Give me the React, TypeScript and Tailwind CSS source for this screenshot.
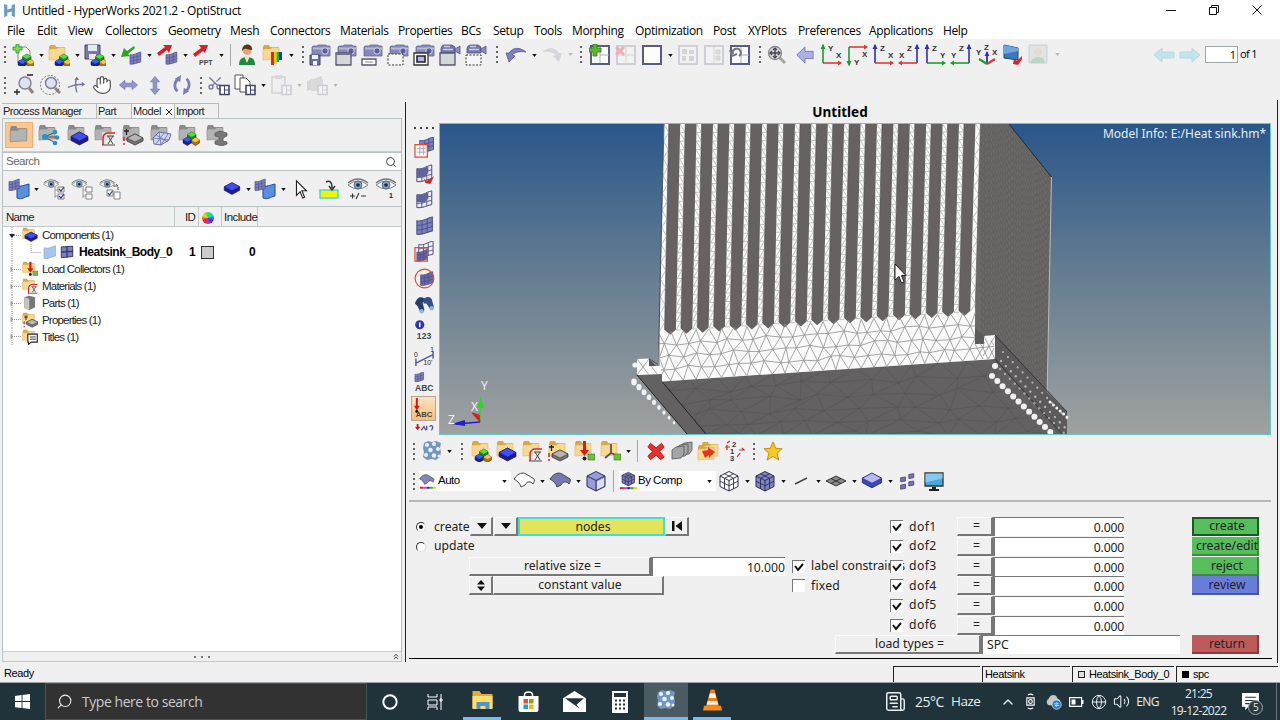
import React from 'react';
import { ChevronUp, Globe, Hand, Newspaper, Scissors, Search, Volume2 } from 'lucide-react';

interface IcoProps {
  children: React.ReactNode;
  className?: string;
}

const Ico: React.FC<IcoProps> = ({ children, className = 'w-[22px] h-[22px]' }) => (
  <svg viewBox="0 0 22 22" className={`shrink-0 ${className}`} fill="none">
    {children}
  </svg>
);

const Slot: React.FC<IcoProps> = ({ children, className = 'w-[26px]' }) => (
  <div className={`flex items-center justify-center shrink-0 ${className}`}>{children}</div>
);

const Drop = ({ faded = false, className = 'w-[10px]' }: { faded?: boolean; className?: string }) => (
  <div className={`flex items-center justify-center shrink-0 ${className}`}>
    <svg viewBox="0 0 6 4" className={faded ? 'w-[5px] h-[3px]' : 'w-[5px] h-[3px] mt-[1px]'}>
      <path d="M0 0h6L3 4z" fill={faded ? '#b5b5b5' : '#111'} />
    </svg>
  </div>
);

const Grip = ({ className = 'w-[10px]' }: { className?: string }) => (
  <div className={`flex flex-col items-center justify-center gap-[3px] shrink-0 ${className}`}>
    {[0, 1, 2, 3].map((i) => (
      <span key={i} className="w-[2px] h-[2px] bg-[#666]" />
    ))}
  </div>
);

const Sep = ({ className = 'w-[8px]' }: { className?: string }) => (
  <div className={`flex items-center justify-center shrink-0 ${className}`}>
    <span className="w-px h-[22px] bg-[#a8a8a8]" />
  </div>
);

// ---- shared icon parts ----

const Folder = ({ grey = false, x = 0, y = 0 }: { grey?: boolean; x?: number; y?: number }) => (
  <g transform={`translate(${x} ${y})`}>
    <path d="M1 3l1-2h5l1 2h8l1 1v11H1z" fill={grey ? '#8a8a8a' : '#dba648'} />
    <path d="M1 16V5.500l2-.500h6l1-1.500h7V15z" fill={grey ? '#b3b3b3' : '#f9d98f'} stroke={grey ? '#858585' : '#e3b55c'} strokeWidth="0.600" />
  </g>
);

const Block = ({ x, y, s = 1, top, side }: { x: number; y: number; s?: number; top: string; side: string }) => (
  <g transform={`translate(${x} ${y}) scale(${s})`}>
    <path d="M0 3l5-3 5 3v4l-5 3-5-3z" fill={side} stroke="#222" strokeWidth="0.6" />
    <path d="M0 3l5-3 5 3-5 3z" fill={top} />
  </g>
);

const Blocks = ({ x = 0, y = 0 }: { x?: number; y?: number }) => (
  <g transform={`translate(${x} ${y})`}>
    <Block x={2.5} y={-1} s={0.85} top="#52e03a" side="#188a12" />
    <Block x={-2} y={4} s={0.85} top="#3c5df0" side="#1421a0" />
    <Block x={6.5} y={4.5} s={0.8} top="#ffc14a" side="#b36d0a" />
  </g>
);

const Slab = ({ x = 5, y = 9, top = '#3f4df2', side = '#1a1a9c' }: { x?: number; y?: number; top?: string; side?: string }) => (
  <g transform={`translate(${x} ${y})`}>
    <path d="M0 4.500L8.500 0 17 4.500v4L8.500 13 0 8.500z" fill={side} stroke="#1b1b4d" strokeWidth="0.7" />
    <path d="M0 4.500L8.500 0 17 4.500 8.500 9z" fill={top} stroke="#1b1b4d" strokeWidth="0.5" />
  </g>
);

const MeshPatch = ({ x = 0, y = 0, s = 1, fill = '#7b80c4' }: { x?: number; y?: number; s?: number; fill?: string }) => (
  <g transform={`translate(${x} ${y}) scale(${s})`}>
    <path d="M0 3C5 4 7 1 12 0v11C7 12 5 14 0 13.500z" fill={fill} stroke="#4b4e80" strokeWidth="0.8" />
    <path d="M0 6.500C5 7 7 5 12 4M0 10C5 10.500 7 8.500 12 7.500M4 3.500v10M8 1.500v11" stroke="#4b4e80" strokeWidth="0.7" />
  </g>
);

const Material = ({ x = 8, y = 8 }: { x?: number; y?: number }) => (
  <g transform={`translate(${x} ${y})`}>
    <path d="M0 0h13v13H0z" fill="#f3f0ec" fillOpacity="0.700" />
    <path d="M1 13V5C2 2 4 1 6 1h7" stroke="#d22" strokeWidth="1.500" />
    <path d="M0 13h13M5 4h7M6 4l5 8M11 4L6 12" stroke="#444" strokeWidth="1" />
  </g>
);

const Property = ({ x = 0, y = 6 }: { x?: number; y?: number }) => (
  <g transform={`translate(${x} ${y})`}>
    <path d="M2 2h5M4.500 0v6" stroke="#222" strokeWidth="1.300" />
    <path d="M2 8v4M2 14v2" stroke="#d22" strokeWidth="1.500" />
    <path d="M5 9l8-4 8 4v3l-8 4-8-4z" fill="#777" stroke="#222" strokeWidth="0.700" />
    <path d="M5 9l8-4 8 4-8 4z" fill="#b5b5b5" stroke="#222" strokeWidth="0.500" />
  </g>
);

const Load = () => (
  <g>
    <path d="M10 1h3v9h3l-4.500 6L7 10h3z" fill="#e01818" />
    <circle cx="11.500" cy="18.500" r="2" fill="#222" />
    <path d="M15 14h7v6h-7z" fill="#6fbf40" stroke="#35701a" strokeWidth="0.600" />
  </g>
);

const Camera = () => (
  <g>
    <path d="M3 3l1-1h4l1-1h8l1 1h3v10H3z" fill="#8588b8" stroke="#66689a" strokeWidth="0.800" />
    <path d="M4 3.500h17v2H4z" fill="#b6b8d8" />
    <circle cx="16" cy="7" r="3.200" fill="#5d6092" stroke="#dcdcf0" strokeWidth="0.900" />
  </g>
);

const Video = () => (
  <g>
    <path d="M3 2l2-1h8l3 2v6H2V4z" fill="#7477aa" stroke="#50527f" strokeWidth="0.800" />
    <path d="M16 5l5-3v8l-5-3z" fill="#8b8ebc" stroke="#50527f" strokeWidth="0.800" />
    <path d="M5 2.500h6M4 5.500h10" stroke="#c9cbe5" strokeWidth="1.300" />
  </g>
);

const Eye = ({ y = 0 }: { y?: number }) => (
  <g transform={`translate(0 ${y})`}>
    <path d="M1 5Q11-3 21 5" stroke="#777" strokeWidth="1.300" />
    <path d="M1 7Q11-1 21 7Q11 15 1 7z" fill="#f4f4f4" stroke="#777" strokeWidth="0.900" />
    <circle cx="11" cy="7" r="4" fill="#7f9fc4" stroke="#46627f" strokeWidth="0.700" />
    <circle cx="11" cy="7" r="1.800" fill="#1c2b3c" />
  </g>
);

const Layout = ({ children, faded = false }: { children?: React.ReactNode; faded?: boolean }) => (
  <g opacity={faded ? 0.22 : 1}>
    <path d="M2 2h18v18H2z" fill="#fdfdff" stroke="#5a5c84" strokeWidth="2" />
    {children}
  </g>
);

const MiniWindow = () => (
  <g>
    <path d="M12 11.500h9v9h-9z" fill="#fff" stroke="#44466b" strokeWidth="1.600" />
    <path d="M16.500 12v8M17 16h4" stroke="#44466b" strokeWidth="1" />
  </g>
);

const Cube = ({ fill = '#9a9ddb', mesh = false }: { fill?: string; mesh?: boolean }) => (
  <g stroke="#2c2e52" strokeWidth="1">
    <path d="M2 6l9-4.500L20 6v10.500L11 21l-9-4.500z" fill={fill} />
    <path d="M2 6l9 4.500L20 6M11 10.500V21" />
    {mesh && <path d="M6.500 3.800l9 4.500v10.500M15.500 3.800l-9 4.500v10.500M2 11.200l9 4.500 9-4.500" strokeWidth="0.900" />}
    {!mesh && <path d="M12 11.500l7-3.500v8l-7 3.500z" fill="#dddffa" strokeWidth="0" />}
  </g>
);

const Sheet = ({ fill = 'none' }: { fill?: string }) => (
  <path d="M1 9C5 3 10 2 13 4l8 5c1 1 0 3-1 5-2-3-6-3-8 1L8 17c-1-4-4-6-7-8z" fill={fill} stroke="#444" strokeWidth="1" />
);

const HyperCube = () => (
  <g>
    <path d="M3 3l4-2 4 1 4-1 5 2-1 5 1 4-1 5-4 3-4-1-5 1-4-3 1-5-1-4z" fill="#7796bd" />
    <g fill="#e8f1fa">
      <circle cx="6" cy="5" r="2" />
      <circle cx="13" cy="4" r="2" />
      <circle cx="9.500" cy="10" r="2.300" />
      <circle cx="17" cy="9" r="2" />
      <circle cx="5" cy="15" r="2" />
      <circle cx="13" cy="15.500" r="2.300" />
      <circle cx="18" cy="16" r="1.500" />
    </g>
  </g>
);

interface AxisProps {
  up: [string, string];
  side: [string, string];
  flip?: boolean;
  down?: boolean;
}

const AxisView: React.FC<AxisProps> = ({ up, side, flip = false, down = false }) => {
  const x = flip ? 19 : 3;
  const end = flip ? 1 : 21;
  const y = down ? 3 : 19;
  const tip = down ? 21 : 1;
  const dx = flip ? 3 : -3;
  const dy = down ? -4 : 4;
  return (
    <Ico>
      <path d={`M${x} ${y}V${tip}`} stroke={up[1]} strokeWidth="1.600" />
      <path d={`M${x - 2.5} ${tip + dy}L${x} ${tip - dy / 3}L${x + 2.5} ${tip + dy}z`} fill={up[1]} />
      <path d={`M${x} ${y}H${end}`} stroke={side[1]} strokeWidth="1.600" />
      <path d={`M${end + dx} ${y - 2.5}L${end - dx / 3} ${y}L${end + dx} ${y + 2.5}z`} fill={side[1]} />
      <g fill="#333" fontFamily="Liberation Sans, sans-serif" fontWeight="700" fontSize="8">
        <text x={flip ? 9 : 8} y={down ? 21 : 7}>{up[0]}</text>
        <text x={flip ? 1 : 16} y={down ? 13 : 14}>{side[0]}</text>
      </g>
    </Ico>
  );
};

const R = '#dc3a3a';
const G = '#17a12b';
const B = '#3030b8';

// ---- title bar and menus ----

const menus = [
  { label: 'File', width: 'w-[30px]' },
  { label: 'Edit', width: 'w-[31px]' },
  { label: 'View', width: 'w-[37px]' },
  { label: 'Collectors', width: 'w-[63px]' },
  { label: 'Geometry', width: 'w-[62px]' },
  { label: 'Mesh', width: 'w-[40px]' },
  { label: 'Connectors', width: 'w-[70px]' },
  { label: 'Materials', width: 'w-[58px]' },
  { label: 'Properties', width: 'w-[63px]' },
  { label: 'BCs', width: 'w-[32px]' },
  { label: 'Setup', width: 'w-[41px]' },
  { label: 'Tools', width: 'w-[38px]' },
  { label: 'Morphing', width: 'w-[63px]' },
  { label: 'Optimization', width: 'w-[78px]' },
  { label: 'Post', width: 'w-[35px]' },
  { label: 'XYPlots', width: 'w-[50px]' },
  { label: 'Preferences', width: 'w-[71px]' },
  { label: 'Applications', width: 'w-[74px]' },
  { label: 'Help', width: 'w-[40px]' },
];

const TitleBar = () => (
  <div className="flex items-center h-[20px] bg-white pl-[3px] pr-[18px]">
    <svg viewBox="0 0 12 12" className="w-[13px] h-[13px]">
      <path d="M1 0l3 1v4l4-1V1l3-1v12l-3-1V7L4 8v3l-3 1z" fill="#6f9dbd" />
    </svg>
    <span className="ml-[6px] mt-[2px] text-[12px] tracking-[-0.310px] whitespace-nowrap">Untitled - HyperWorks 2021.2 - OptiStruct</span>
    <div className="ml-auto flex items-center gap-[33px]">
      <svg viewBox="0 0 10 10" className="w-[10px] h-[10px]"><path d="M0 5.500h10" stroke="#111" /></svg>
      <svg viewBox="0 0 10 10" className="w-[10px] h-[10px]" fill="none" stroke="#111"><path d="M.5 2.500h7v7h-7zM2.500 2.500v-2h7v7h-2" /></svg>
      <svg viewBox="0 0 10 10" className="w-[10px] h-[10px]"><path d="M.5.5l9 9M9.500.5l-9 9" stroke="#111" /></svg>
    </div>
  </div>
);

const MenuBar = () => (
  <div className="flex items-center h-[19px] bg-white pl-[7px] pb-[1px] text-[12px] tracking-[-0.370px]">
    {menus.map((menu) => (
      <span key={menu.label} className={`${menu.width} shrink-0 whitespace-nowrap mt-[3px]`}>{menu.label}</span>
    ))}
  </div>
);

const MainToolbar = () => (
  <div className="flex items-center h-[31px]">
    <Grip />
    <Slot>
      <Ico><path d="M6 3h8l4 4v12H6z" fill="#f5f5f5" stroke="#888" /><path d="M4 0h3v3h3v3H7v3H4V6H1V3h3z" fill="#7ddc5a" stroke="#2f8f1e" strokeWidth="0.800" /><Blocks x={8} y={11} /></Ico>
    </Slot>
    <Drop />
    <Slot><Ico><Folder /><Blocks x={9} y={11} /></Ico></Slot>
    <Drop />
    <Slot>
      <Ico><path d="M1 1h15v14H1z" fill="#7679a8" stroke="#44466b" /><path d="M4 1h9v6H4zM5 10h7v5H5z" fill="#e6e8f3" /><Blocks x={9} y={11} /></Ico>
    </Slot>
    <Drop />
    <Slot><Ico><MeshPatch x={10} y={8} s={0.9} /><path d="M14 2L7 7 4 4 1 13l9-1-2-2 7-6z" fill="#29a51e" /></Ico></Slot>
    <Drop />
    <Slot><Ico><MeshPatch x={10} y={8} s={0.9} /><path d="M1 9l8-6-2-2 9 0-3 8-2-3-8 6z" fill="#d81f26" /></Ico></Slot>
    <Drop />
    <Slot>
      <Ico>
        <path d="M1 10l8-6-2-3 9 0-3 8-2-2-8 6z" fill="#d81f26" />
        <text x="7" y="21" fontSize="7" fontWeight="700" fill="#444" fontFamily="Liberation Sans, sans-serif">PPT</text>
      </Ico>
    </Slot>
    <Drop />
    <Sep />
    <Slot>
      <Ico><path d="M3 21c0-6 3-8 8-8s8 2 8 8z" fill="#1f8a3c" /><path d="M8 12h6l-3 7z" fill="#e9e2d2" /><circle cx="11" cy="6.500" r="4.500" fill="#e0a878" /><path d="M6 7c0-9 11-8 10-1-3 0-6-2-8-1z" fill="#5b3418" /></Ico>
    </Slot>
    <Slot>
      <Ico><Folder /><path d="M9 8h3v13H9z" fill="#e22" /><path d="M12 8h2.500v12H12z" fill="#fc0" /><path d="M14.500 8H17v10h-2.500z" fill="#2b2" /><path d="M17 8h3v8h-3z" fill="#23d" /></Ico>
    </Slot>
    <Drop />
    <Grip className="w-[11px] ml-px mr-[-1px]" />
    <Slot><Ico><Camera /><path d="M1 11h10v10H1z" fill="#6b6e9e" stroke="#44466b" /><path d="M3 11h6v4H3zM4 17h4v4H4z" fill="#f0f0f8" /></Ico></Slot>
    <Slot><Ico><Camera /><path d="M1 9h15v12H1z" fill="#d4d8d8" stroke="#55586b" strokeWidth="1.300" /><path d="M1 9h15v2H1z" fill="#6f7288" /></Ico></Slot>
    <Slot><Ico><Camera /><path d="M1 15h14v6H1z" fill="#fff" stroke="#55586b" strokeWidth="1.300" /><path d="M4 18h8" stroke="#888" /></Ico></Slot>
    <Slot><Ico><Camera /><path d="M1 10h15v11H1z" fill="#f6f6f6" stroke="#333" strokeDasharray="2 1.500" /></Ico></Slot>
    <Slot><Ico><Camera /><path d="M1 9h14v12H1z" fill="#fff" stroke="#333" strokeWidth="1.300" /><path d="M4 12h8v6H4z" fill="#b4b8e0" stroke="#223" strokeWidth="1.600" /></Ico></Slot>
    <Slot><Ico><Video /><path d="M1 9h15v12H1z" fill="#d4d8d8" stroke="#55586b" strokeWidth="1.300" /></Ico></Slot>
    <Slot><Ico><Video /><path d="M1 11h15v10H1z" fill="#f6f6f6" stroke="#333" strokeDasharray="2 1.500" /></Ico></Slot>
    <Grip className="w-[14px] ml-px mr-[-1px]" />
    <Slot><Ico><path d="M1 9l3 9 6-6-3-1c3-3 8-4 14-3C15 3 8 3 4 9z" fill="#7e81bd" stroke="#4d5090" strokeWidth="0.700" /></Ico></Slot>
    <Drop />
    <Slot><Ico><path d="M21 9l-3 9-6-6 3-1C12 8 7 7 1 8c6-5 13-5 17 1z" fill="#d6d6dc" /></Ico></Slot>
    <Drop faded />
    <Grip className="w-[12px]" />
    <Slot><Ico><Layout><path d="M11 11h9M11 3v16" stroke="#a9abc8" /></Layout><path d="M4 0h4v4h4v4H8v4H4V8H0V4h4z" fill="#57b82c" stroke="#2c7d10" strokeWidth="0.800" /></Ico></Slot>
    <Slot><Ico><Layout faded><path d="M3 11h16M11 3v16" stroke="#777" /></Layout><path d="M1 3l8 8M9 3l-8 8" stroke="#ecb0ac" strokeWidth="3" /></Ico></Slot>
    <Slot><Ico><Layout /></Ico></Slot>
    <Drop />
    <Slot><Ico><Layout faded><path d="M5 5h5v5H5zM12 6h5v4h-5zM5 12h4v5H5zM12 12h5v5h-5z" fill="#777" /></Layout></Ico></Slot>
    <Slot><Ico><Layout faded><path d="M11 3v16M13 6h4v4h-4zM13 12h4v4h-4z" stroke="#777" fill="#999" /></Layout></Ico></Slot>
    <Slot><Ico><Layout><path d="M12 3v16M12 11h8" stroke="#a9abc8" /></Layout><path d="M4 10a4 4 0 1 1 6 2M1 6l2 6 5-2" stroke="#777" strokeWidth="2" /></Ico></Slot>
    <Grip className="w-[11px] ml-px mr-[-1px]" />
    <Slot><Ico><path d="M13 13l6 6" stroke="#a9a49c" strokeWidth="3" /><circle cx="9" cy="9" r="6.500" fill="#d9dae2" stroke="#888" strokeWidth="1.300" /><path d="M9 4v10M4 9h10" stroke="#444" strokeWidth="1.400" /><path d="M7 6l2-2 2 2M7 12l2 2 2-2M6 7L4 9l2 2M12 7l2 2-2 2" stroke="#444" strokeWidth="1.200" /></Ico></Slot>
    <Slot className="w-[26px] ml-[2px]"><Ico className="w-[20px] h-[22px]"><path d="M2 11l9-9v5h9v8h-9v5z" fill="#aeb0e3" stroke="#7b7dad" /></Ico></Slot>
    <Slot><AxisView up={['Y', G]} side={['X', R]} /></Slot>
    <Slot><AxisView up={['Y', G]} side={['X', R]} down /></Slot>
    <Slot><AxisView up={['Z', B]} side={['X', R]} /></Slot>
    <Slot><AxisView up={['Z', B]} side={['X', R]} flip /></Slot>
    <Slot><AxisView up={['Z', B]} side={['Y', G]} /></Slot>
    <Slot><AxisView up={['Z', B]} side={['Y', G]} flip /></Slot>
    <Slot>
      <Ico>
        <path d="M11 20V8" stroke={B} strokeWidth="1.800" /><path d="M8.500 12L11 7l2.500 5z" fill={B} />
        <path d="M11 20l-8-5" stroke={G} strokeWidth="2.200" /><path d="M11 20l8-5" stroke={R} strokeWidth="2.200" />
        <g fill="#333" fontFamily="Liberation Sans, sans-serif" fontWeight="700" fontSize="8"><text x="0" y="11">Y</text><text x="8" y="6">Z</text><text x="16" y="11">X</text></g>
      </Ico>
    </Slot>
    <Slot><Ico><path d="M2 1l14 3v12L2 14z" fill="#3b78bd" stroke="#26446b" /><path d="M2 1l14 3v3L2 10z" fill="#6fa7dc" /><path d="M12 15l3 2 5-5v3l-4 6-5-1z" fill="#df1f22" /></Ico></Slot>
    <Slot><Ico><g opacity="0.300"><path d="M1 1h18v18H1z" fill="#b9cdd3" stroke="#789" /><circle cx="10" cy="8" r="4" fill="#d9a986" /><path d="M3 19c0-8 14-8 14 0z" fill="#3a9f60" /></g></Ico></Slot>
    <Drop faded />
    <div className="ml-auto flex items-center pr-[23px]">
      <Ico className="w-[22px] h-[22px]"><path d="M1 11l8-7v4h12v6H9v4z" fill="#c3e4ea" stroke="#b5d9df" /></Ico>
      <Ico className="w-[22px] h-[22px] ml-[4px]"><path d="M21 11l-8-7v4H1v6h12v4z" fill="#c3e4ea" stroke="#b5d9df" /></Ico>
      <div className="w-[33px] h-[17px] ml-[4px] border border-[#a0a8ac] bg-white text-right pr-[1px] text-[11px] leading-[15px]">1</div>
      <span className="ml-[2px] text-[11px] tracking-[-0.600px]">of 1</span>
    </div>
  </div>
);

const NavToolbar = () => (
  <div className="flex items-center h-[30px]">
    <Grip />
    <Slot className="w-[27px]"><Ico><circle cx="12" cy="9" r="6" fill="#dfe2f0" stroke="#80829a" strokeWidth="1.500" /><path d="M16 14l4 5" stroke="#90827a" strokeWidth="3" /><path d="M14 1h6M1 18h6M4 15v6" stroke="#222" strokeWidth="1.300" /></Ico></Slot>
    <Slot className="w-[26px]"><Ico><circle cx="12" cy="9" r="5.500" fill="#dfe2f0" stroke="#80829a" strokeWidth="1.500" /><path d="M16 14l5 5" stroke="#90827a" strokeWidth="3" /><circle cx="11" cy="11" r="9.500" stroke="#555" strokeDasharray="2 1.500" strokeWidth="0.800" /></Ico></Slot>
    <Slot className="w-[25px]"><Ico className="w-[18px] h-[20px]"><path d="M12 2c-2 5-2 11 0 18M1 14c6-3 13-4 20-4" stroke="#777aa3" strokeWidth="1.800" /><path d="M9 5l3-4 3 4zM18 7l4 3-4 3z" fill="#777aa3" /></Ico></Slot>
    <Slot className="w-[27px]"><Hand size={20} strokeWidth={1.400} color="#555" fill="#fff" /></Slot>
    <Slot className="w-[26px]"><Ico className="w-[21px] h-[20px]"><path d="M1 11l6-5v3h8V6l6 5-6 5v-3H7v3z" fill="#9295cf" stroke="#666aa4" strokeWidth="0.700" /></Ico></Slot>
    <Slot className="w-[27px]"><Ico className="w-[20px] h-[21px]"><path d="M11 1l5 6h-3v8h3l-5 6-5-6h3V7H6z" fill="#9295cf" stroke="#666aa4" strokeWidth="0.700" /></Ico></Slot>
    <Slot className="w-[27px]"><Ico className="w-[20px] h-[20px]"><path d="M7 4C2 8 2 14 6 18M15 18c5-4 5-10 1-14" stroke="#7b7fb8" strokeWidth="3" /><path d="M3 4l7-4-1 8zM19 18l-7 4 1-8z" fill="#7b7fb8" /></Ico></Slot>
    <Grip className="w-[12px]" />
    <Slot className="w-[24px]"><Ico><g transform="rotate(-90 8 9)"><Scissors size={16} color="#777aa3" strokeWidth={2} /></g><MiniWindow /></Ico></Slot>
    <Slot className="w-[28px]"><Ico><path d="M1 1h8v14H1z" fill="#fff" stroke="#555" /><path d="M6 4h6l4 4v10H6z" fill="#fff" stroke="#555" /><MiniWindow /></Ico></Slot>
    <Drop className="w-[8px]" />
    <Slot className="w-[27px]"><Ico><g opacity="0.200"><path d="M2 3h13v16H2z" fill="#eee" stroke="#666" strokeWidth="1.500" /><path d="M5 1h7v4H5z" fill="#888" /><MiniWindow /></g></Ico></Slot>
    <Drop faded />
    <Slot className="w-[26px]"><Ico><g opacity="0.200"><path d="M1 7l15-5v10L1 17z" fill="#777" /><path d="M5 5h12v12H5z" fill="#888" /><MiniWindow /></g></Ico></Slot>
    <Drop faded />
  </div>
);

// ---- model browser ----

const tree = [
  {
    label: 'Components (1)', open: true,
    icon: <><Folder /><Slab x={4} y={7} /></>,
  },
  { label: 'Load Collectors (1)', icon: <><Folder /><Load /></> },
  { label: 'Materials (1)', icon: <><Folder /><Material /></> },
  { label: 'Parts (1)', icon: <><path d="M3 3l7-2 8 2v14l-8 4-7-3z" fill="#777" /><path d="M3 3l7 2v16l-7-3z" fill="#c5c5c5" /></> },
  { label: 'Properties (1)', icon: <><Folder /><Property x={1} y={5} /></> },
  { label: 'Titles (1)', icon: <><Folder /><path d="M8 7h13v11h-8l-4 3v-3H8z" fill="#fff" stroke="#222" strokeWidth="1.500" /><path d="M11 11h8M11 14h8" stroke="#222" strokeWidth="1.200" /></> },
];

const SidePanel = () => (
  <div className="flex flex-col w-[402px] pl-[2px] pt-[3px] shrink-0">
    <div className="flex h-[15px] shrink-0 font-['Liberation_Sans',sans-serif] text-[11px] leading-[15px] tracking-[-0.500px] whitespace-nowrap text-[#222]">
      <div className="w-[95px] border-t border-r border-[#b4bcc0] pl-[1px]">Process Manager</div>
      <div className="w-[35px] border-t border-r border-[#b4bcc0] pl-[1px]">Part</div>
      <div className="flex items-center w-[43px] border-t border-r border-[#b4bcc0] bg-white pl-[1px] pt-[1px] tracking-[-0.400px]">
        Model
        <svg viewBox="0 0 8 8" className="w-[8px] h-[8px] ml-[4px]"><path d="M1 1l6 6M7 1L1 7" stroke="#222" /></svg>
      </div>
      <div className="w-[44px] border-t border-r border-[#b4bcc0] pl-[1px] tracking-[-0.500px]">Import</div>
    </div>
    <div className="flex items-center h-[34px] shrink-0 border border-[#b9c1c5] border-b-[#ccc] pl-[2px]">
      <div className="w-[28px] h-[26px] bg-[#fcc68c] border border-[#e8b27a] flex items-center justify-center"><Ico className="w-[23px] h-[23px]"><Folder grey x={1} y={1} /></Ico></div>
      <Slot className="w-[32px]"><Ico><Folder grey /><path d="M6 13l12-5M6 13l13 0M6 13l12 6" stroke="#456" /><g fill="#2c8fd6"><circle cx="7" cy="13" r="3" /><circle cx="17" cy="8" r="2.300" /><circle cx="19" cy="13.500" r="2.300" /><circle cx="17" cy="19" r="2.300" /></g></Ico></Slot>
      <Slot className="w-[25px]"><Ico><Folder grey /><Slab x={4} y={8} /></Ico></Slot>
      <Slot className="w-[30px]"><Ico><Folder grey /><Material /></Ico></Slot>
      <Slot className="w-[26px]"><Ico><Folder grey /><Property x={0} y={5} /></Ico></Slot>
      <Slot className="w-[30px]"><Ico><Folder grey /><path d="M3 14l6-6 12 2-2 6-8 5-7-1z" fill="#d3d5f0" stroke="#6a6dab" /><path d="M6 11l12 7M9 8l2 13M14 9l-8 11M3 14l16 2M18 10l-7 11" stroke="#6a6dab" strokeWidth="0.800" /></Ico></Slot>
      <Slot className="w-[26px]"><Ico><Folder grey /><Blocks x={7} y={9} /></Ico></Slot>
      <Slot className="w-[30px]"><Ico><Folder grey /><path d="M9 9l5-2 7 2v3l-4 2v3l4 1v2l-5 2-7-2v-3l4-1v-3l-4-1z" fill="#777" stroke="#555" strokeWidth="0.700" /></Ico></Slot>
    </div>
    <div className="flex items-center justify-between h-[19px] shrink-0 bg-white border border-[#b9c1c5] px-[3px] text-[11.500px] text-[#666]">
      <span className="tracking-[-0.500px] pt-[1px] font-['Liberation_Sans',sans-serif]">Search</span>
      <Search size={12} color="#444" className="mr-[1px]" />
    </div>
    <div className="flex items-center h-[35px] shrink-0 border-x border-[#b9c1c5] pl-[2px]">
      <Slot className="w-[27px]"><Ico><path d="M9 8c4 1 7-1 12-2v12c-5 1-7 4-12 2z" fill="#5a8fe0" stroke="#1f4c97" /><MeshPatch x={1} y={1} s={0.85} /></Ico></Slot>
      <Drop className="w-[8px]" />
      {[0, 1, 2].map((i) => (
        <Slot key={i} className="w-[28px]">
          <Ico>
            <g transform="translate(0 1) scale(.75)"><Eye /></g>
            {i < 2 ? <path d="M12 9v11M12 12h3M12 18h3" stroke="#888" strokeWidth="0.800" /> : <path d="M14 8h5l-2-2m2 6v-3" stroke="#555" />}
            <path d={i < 2 ? 'M15 9h6v5h-6zM15 16h6v5h-6z' : 'M8 12h6v6H8zM15 14h6v7h-6z'} fill="#fff" stroke="#777" strokeWidth="0.900" />
            {i !== 1 && <path d={i ? 'M9 15l1.500 2 3-4' : 'M16 11l2 2 3-4M16 18l2 2 3-4'} stroke="#2736a0" strokeWidth="1.200" />}
          </Ico>
        </Slot>
      ))}
      <div className="ml-auto flex items-center pr-[1px]">
        <Slot className="w-[25px]"><Ico className="w-[20px] h-[20px]"><Slab x={2.5} y={4} /></Ico></Slot>
        <Drop className="w-[8px]" />
        <Slot className="w-[26px]"><Ico><path d="M9 8c4 1 7-1 12-2v12c-5 1-7 4-12 2z" fill="#5a8fe0" stroke="#1f4c97" /><MeshPatch x={1} y={1} s={0.85} /></Ico></Slot>
        <Drop />
        <Slot><Ico className="w-[20px] h-[20px]"><path d="M6 2v16l4-4 3 7 2-1-3-7h5z" fill="#fff" stroke="#222" strokeWidth="1.200" /></Ico></Slot>
        <Slot className="w-[30px]"><Ico><path d="M2 12h18v8H2z" fill="#f4f400" stroke="#43d9d9" strokeWidth="1.500" /><path d="M8 4c4-2 6 0 6 6M11 8l3 4 3-4" stroke="#333" strokeWidth="1.500" /></Ico></Slot>
        <Slot className="w-[28px]"><Ico><Eye /><path d="M3 18h5M5.500 15.500v5M9 21l3-6M14 18h5" stroke="#333" strokeWidth="1.100" /></Ico></Slot>
        <Slot className="w-[28px]"><Ico><Eye /><text x="14" y="20" fontSize="7" fill="#222" fontWeight="700" fontFamily="Liberation Sans, sans-serif">1</text></Ico></Slot>
      </div>
    </div>
    <div className="flex flex-col flex-1 min-h-0 border border-[#b9c1c5] border-b-[#ccc] bg-white font-['Liberation_Sans',sans-serif] text-[11.500px] tracking-[-0.800px]">
      <div className="flex h-[20px] shrink-0 bg-[#f0f0f0] border-b border-[#c3c8ca] leading-[21px] tracking-[-0.700px] text-[#222]">
        <div className="w-[172px] pl-[3px] border-r border-[#c3c8ca]">Name</div>
        <div className="w-[24px] text-right pr-[3px] border-r border-[#c3c8ca]">ID</div>
        <div className="w-[23px] flex items-center pl-[3px] pt-[2px] border-r border-[#c3c8ca]">
          <span className="w-[12px] h-[12px] rounded-full bg-[conic-gradient(#3be03b,#21c6e8,#2638d8,#c02be0,#e82222,#f5d723,#3be03b)]" />
        </div>
        <div className="w-[36px] pl-[2px] tracking-[-0.550px] border-r border-[#c3c8ca] whitespace-nowrap">Include</div>
      </div>
      <div className="flex flex-col pl-[5px] text-[#222]">
        {tree.map((node) => (
          <React.Fragment key={node.label}>
            <div className="flex items-center h-[16.900px] whitespace-nowrap">
              <svg viewBox="0 0 14 17" className="w-[14px] h-[17px]" fill="none">
                <path d="M4 0v17M4 8.500h10" stroke="#999" strokeDasharray="1 1" />
                <path d={node.open ? 'M1 7h6l-3 4z' : 'M2.500 6v5l3-2.500z'} fill={node.open ? '#222' : '#999'} />
              </svg>
              <Ico className="w-[16px] h-[16px]">{node.icon}</Ico>
              <span className="ml-[4px] pt-[1px]">{node.label}</span>
            </div>
            {node.open && (
              <div className="flex items-center h-[16.900px] whitespace-nowrap">
                <svg viewBox="0 0 34 17" className="w-[34px] h-[17px]" fill="none">
                  <path d="M4 0v17M23 0v8.500h10" stroke="#999" strokeDasharray="1 1" />
                </svg>
                <Ico className="w-[15px] h-[15px]"><path d="M3 4c6 2 10-1 17-3v15c-7 1-11 5-17 4z" fill="#a7c4ef" stroke="#8aa9d8" /></Ico>
                <Ico className="w-[14px] h-[14px] ml-[3px]"><path d="M2 3l18-1v16L2 20z" fill="#7b80c4" stroke="#333561" strokeWidth="1.500" /><path d="M11 2v18M2 11l18-1" stroke="#333561" strokeWidth="2" /></Ico>
                <span className="ml-[5px] w-[104px] shrink-0 font-bold text-black text-[12px] tracking-[-0.450px]">Heatsink_Body_0</span>
                <span className="ml-[6px] w-[7px] font-bold text-black text-[12px]">1</span>
                <span className="ml-[5px] w-[13px] h-[13px] shrink-0 border border-[#333] bg-[#ccc]" />
                <span className="ml-[35px] font-bold text-black text-[12px]">0</span>
              </div>
            )}
          </React.Fragment>
        ))}
      </div>
    </div>
    <div className="flex items-center h-[10px] shrink-0 border border-t-0 border-[#b9c9d0] pr-[2px] mb-[2px]">
      <div className="flex gap-[5px] ml-[191px]">
        {[0, 1, 2].map((i) => (
          <span key={i} className="w-[2px] h-[2px] bg-[#777]" />
        ))}
      </div>
      <svg viewBox="0 0 7 7" className="w-[6px] h-[7px] ml-auto" fill="none" stroke="#222"><path d="M1 3.500L3.500 1 6 3.500M1 6.500L3.500 4 6 6.500" /></svg>
    </div>
  </div>
);

// ---- graphics area ----

const FINS = 20;

// Deterministic noise so the mesh is the same on every render
const noise = (n: number) => {
  const v = Math.sin(n * 127.1) * 43758.5453;
  return v - Math.floor(v) - 0.5;
};

const finTop = (i: number) => 663.8 + i * 16.4;
const finBottom = (i: number) => 659.5 + i * 16.35;
const rootY = (x: number) => 331 - ((x - 660) / 315) * 20;
const baseY = (x: number) => 381.5 - ((x - 662) / 333) * 22.5;

const finLines = () => {
  let d = '';
  for (let i = 0; i < FINS; i++) {
    const endY = rootY(finBottom(i));
    const steps = 24;
    for (let k = 0; k < steps; k++) {
      const y0 = 124 + ((endY - 124) * k) / steps;
      const y1 = 124 + ((endY - 124) * (k + 1)) / steps;
      const x0 = finTop(i) + ((finBottom(i) - finTop(i)) * k) / steps;
      if (i === 0 || i === FINS - 1) {
        d += k % 2 ? `M${x0 + 5} ${y0}L${x0} ${y1}` : `M${x0} ${y0}L${x0 + 5} ${y1}`;
      } else {
        d += k > 12 ? `M${x0 + 5} ${y0}L${x0} ${y1}h5` : `M${x0} ${y0}L${x0 + 5} ${y1}h-5`;
      }
    }
  }
  return d;
};

const baseMesh = () => {
  const rowCount = 5;
  const cols = 27;
  const rows = Array.from({ length: rowCount }, (_, r) =>
    Array.from({ length: cols + 2 }, (_, i) => {
      const x = 658 + (i - (r % 2 ? 0.5 : 0)) * 12.7;
      const t = r / (rowCount - 1);
      const inner = r > 0 && r < rowCount - 1;
      const px = x + (inner ? noise(i + r * 50) * 5 : 0);
      return [px, rootY(px) + 1 + (baseY(px) - rootY(px) - 1) * t + (inner ? noise(i * 3 + r * 9) * 4 : 0)];
    }),
  );
  let d = '';
  rows.forEach((row, r) => {
    if (r > 0 && r < rowCount - 1) d += 'M' + row.map((p) => p.join(' ')).join('L');
    if (r === rowCount - 1) return;
    const next = rows[r + 1];
    const shift = r % 2 ? -1 : 1;
    row.forEach((p, i) => {
      const q = next[i + shift];
      d += `M${next[i].join(' ')}L${p.join(' ')}` + (q ? `L${q.join(' ')}` : '');
    });
  });
  return d;
};

const undersideMesh = () => {
  const pts = (r: number) =>
    Array.from({ length: 13 }, (_, i) => {
      const x0 = 662 + (333 * i) / 12;
      const t = r / 5;
      const x = x0 + t * (i < 7 ? 46 : 62) + (r ? noise(i + r * 31) * 18 : 0);
      return [x, baseY(x0) + (434 - baseY(x0)) * t + (r ? noise(i * 7 + r) * 7 : 0)];
    });
  let d = '';
  for (let r = 0; r < 5; r++) {
    const a = pts(r);
    const b = pts(r + 1);
    d += 'M' + b.map((p) => p.join(' ')).join('L');
    a.forEach((p, i) => {
      d += `M${p.join(' ')}L${b[i].join(' ')}`;
      if (i < 12) d += `M${a[i + 1].join(' ')}L${b[i].join(' ')}`;
    });
  }
  return d;
};

const sideMesh = () => {
  let d = '';
  for (let i = 0; i < 28; i++) {
    const x = 980 + i * 2.6;
    for (let y = 118 + noise(i) * 6; y < 420; y += 7) {
      d += `M${x} ${y}l2.600 5l-1 4`;
    }
  }
  return d;
};

const HeatSink = () => (
  <svg viewBox="440 124 830 310" className="w-[830px] h-[310px] block" fill="none">
    <defs>
      <clipPath id="side"><path d="M979 124H1009L1051.500 177 1047 397 995 336 975 343z" /></clipPath>
      <clipPath id="under"><path d="M662 381.500L995 359 1062 434H704z" /></clipPath>
      <clipPath id="base"><path d="M658 332L975 311V344L994 340V359L662 381.500z" /></clipPath>
    </defs>
    <path d="M979 124H1009L1051.500 177 1047 400 995 336 975 345z" fill="#6b6868" />
    <path d={sideMesh()} stroke="#5b5858" strokeWidth="0.500" clipPath="url(#side)" />
    <path d="M1009 124L1051.500 177" stroke="#222" strokeWidth="0.900" />
    <path d="M1051.500 177L1047 398" stroke="#b8bec0" strokeWidth="1" />
    <path d="M637 375L662 374V381.500L995 359 1062 434H687z" fill="#636161" />
    <path d={undersideMesh()} stroke="#555353" strokeWidth="0.500" clipPath="url(#under)" />
    <path d="M662 381.500L706 434M637 375L687 434" stroke="#222" strokeWidth="1" />
    <path d="M995 335L1047 392 1067 412V434H1062L995 359z" fill="#5c5a5a" />
    <path d="M995 335L1067 412M995 359L1062 434" stroke="#2b2b2b" strokeWidth="0.900" />

    <path d="M664 124H980L975 330 659 345z" fill="#656261" />
    {Array.from({ length: FINS }, (_, i) => (
      <g key={i}>
        <path d={`M${finTop(i)} 124h5L${finBottom(i) + 5} ${rootY(finBottom(i)) + 3}h-5z`} fill="#fbfbfb" />
        <path d={`M${finTop(i) + 5} 124L${finBottom(i) + 5} ${rootY(finBottom(i))}`} stroke="#4e4b4b" strokeWidth="0.600" />
      </g>
    ))}
    <path
      d={
        'M659.500 329' +
        Array.from({ length: FINS - 1 }, (_, i) => {
          const x = finBottom(i) + 5;
          return `L${x} ${rootY(x) - 1}l5.600 5l5.700 -5l2.500 -3`;
        }).join('') +
        'L975 308V344H984V336L995 335V359L662 381.500V374L637 375V359L649 358.500 651 366 658.500 366z'
      }
      fill="#fafafa"
    />
    <path d="M975 328V344H984V336" fill="#5c5a5a" />
    <path d={finLines()} stroke="#8a8a8a" strokeWidth="0.500" />
    <path d={baseMesh()} stroke="#918f8f" strokeWidth="0.800" clipPath="url(#base)" />
    <path d="M637 359l12 16M649 359l-12 16M651 366l6 8M984 336l11 23M995 336l-12 20M975 344l8 15" stroke="#888" strokeWidth="0.700" />
    <path d="M664 124L659 332V366M649 358.500l9 6" stroke="#444" strokeWidth="0.800" />
    <path d="M649 358.500V366H656z" fill="#555" />

    {/* constraint markers along both flanges */}
    <g fill="#f2f2f2">
      <circle cx="635" cy="365" r="2.600" />
      {Array.from({ length: 9 }, (_, i) => (
        <ellipse key={i} cx={634 + i * 5} cy={382 + i * 5.1} rx={2.8 - i * 0.2} ry={3.4 - i * 0.2} />
      ))}
      <circle cx="995" cy="366" r="3" />
      {Array.from({ length: 12 }, (_, i) => (
        <circle key={i} cx={992 + i * 5.3} cy={376 + i * 5.1} r="3" />
      ))}
      {Array.from({ length: 14 }, (_, i) => (
        <g key={i}>
          <circle cx={1003 + i * 4.9} cy={352 + i * 5.1} r="1.100" opacity="0.600" />
          <circle cx={1001 + i * 4.9} cy={361 + i * 5.1} r="1.200" opacity="0.600" />
          <circle cx={1000 + i * 4.9} cy={369 + i * 4.9} r="1.200" opacity="0.500" />
        </g>
      ))}
      {Array.from({ length: 6 }, (_, i) => (
        <circle key={i} cx={1050 + i * 3.4} cy={402 + i * 3} r="1.500" />
      ))}
    </g>

    <path d="M480 422V405" stroke="#27d827" strokeWidth="1.500" />
    <path d="M477 408l3.500-12 3 12z" fill="#27d827" />
    <path d="M480 422l-24 2" stroke="#2020c8" strokeWidth="1.500" />
    <path d="M465 420l-14 4 14 2z" fill="#2020c8" />
    <path d="M480 422l-8-9 7 2z" fill="#d32020" stroke="#d32020" />
    <g fill="#eef2f5" fontFamily="Noto Sans, sans-serif" fontSize="12">
      <text x="481" y="390">Y</text>
      <text x="471" y="411">X</text>
      <text x="448" y="424">Z</text>
    </g>
    <path d="M895 264v16l4-3.500 2.500 6.500 2.500-1-2.500-6.500h4.500z" fill="#fff" stroke="#111" strokeWidth="0.900" />
  </svg>
);

const sideTools = [
  <><MeshPatch x={6} y={0} s={1.2} /><path d="M1 8h13v13H1z" fill="#fff" fillOpacity="0.850" stroke="#e8492f" strokeWidth="1.300" /><path d="M3 12h9M3 16h9M6 10v9M10 10v9" stroke="#999" strokeWidth="0.700" /></>,
  <><MeshPatch x={3} y={2} s={1.3} fill="#e9e9ef" /><path d="M3 6c5 1 7-1 12-2v6l-4 5H3z" fill="#5f629f" /><path d="M10 16l3 3 8-5-4 8-5-1z" fill="#e01f1f" /></>,
  <><MeshPatch x={3} y={2} s={1.3} fill="#e9e9ef" /><path d="M3 6c5 1 7-1 12-2v6l-4 4H3z" fill="#5f629f" /></>,
  <MeshPatch x={3} y={2} s={1.35} fill="#7b7fc0" />,
  <><MeshPatch x={5} y={0} s={1.25} fill="#f1f1f1" /><MeshPatch x={3} y={9} s={0.9} fill="#6265a6" /><path d="M1 7h13v14H1z" stroke="#e8492f" strokeWidth="1.300" /></>,
  <><MeshPatch x={7} y={4} s={1.05} fill="#6568aa" /><circle cx="11" cy="11" r="9.800" stroke="#e8492f" strokeWidth="1.200" /></>,
  <><path d="M1 10c2-7 7-8 10-5l1 2-3 2 2 8-4 3-3-7z" fill="#2b3d6b" /><path d="M10 5c5-4 9-1 9 2l2 7-4 2-4-6-3 0z" fill="#35508a" /><circle cx="8" cy="18" r="2.300" fill="#88b4e8" /><circle cx="18.500" cy="15" r="2.300" fill="#88b4e8" /></>,
  <><circle cx="6" cy="5" r="4.800" fill="#3334b5" /><path d="M6 2.500v5" stroke="#fff" strokeWidth="1.600" /><text x="3" y="20" fontSize="9" fontWeight="700" fill="#444" fontFamily="Liberation Sans, sans-serif">123</text></>,
  <><path d="M2 18L20 9M2 13v8M20 6v7" stroke="#565a94" strokeWidth="1.500" /><g fill="#222" fontSize="7" fontFamily="Liberation Sans, sans-serif"><text x="0" y="11">0</text><text x="17" y="6">1</text><text x="10" y="20">10'</text></g></>,
  <><MeshPatch x={1} y={0} s={0.75} /><text x="1" y="20" fontSize="9" fontWeight="700" fill="#444" fontFamily="Liberation Sans, sans-serif">ABC</text></>,
];

const GraphicsArea = () => (
  <div className="flex">
    <div className="flex flex-col items-center w-[31px] h-[336px] pt-[27px] overflow-hidden">
      <div className="flex gap-[4px] h-[2px] mb-[5px] shrink-0">
        {[0, 1, 2, 3].map((i) => (
          <span key={i} className="w-[2px] h-[2px] bg-[#444]" />
        ))}
      </div>
      {sideTools.map((icon, i) => (
        <div key={i} className="flex items-center h-[26.200px] shrink-0 pl-[1px]">
          <Ico className="w-[21px] h-[21px]">{icon}</Ico>
        </div>
      ))}
      <div className="flex items-center justify-center w-[25px] h-[25px] shrink-0 bg-gradient-to-b from-[#fbe3c4] to-[#f9bd78] border border-[#b8a690]">
        <Ico className="w-[21px] h-[21px]"><path d="M3 0h2v8h2l-3 5-3-5h2z" fill="#d01818" /><circle cx="4" cy="14" r="1.600" fill="#222" /><text x="3" y="20" fontSize="8" fontWeight="700" fill="#444" fontFamily="Liberation Sans, sans-serif">ABC</text></Ico>
      </div>
      <Ico className="w-[20px] h-[20px] mt-[2px]"><path d="M3 1h2v3h2L4 8 1 4h2z" fill="#d01818" /><path d="M8 8l3-4 2 4M14 3v5M17 4c3-3 5 1 2 4" stroke="#565a94" strokeWidth="1.500" /></Ico>
    </div>
    <div className="flex flex-col w-[832px]">
      <div className="h-[23px] text-center pr-[30px] text-[13.500px] leading-[25px] font-bold font-['Noto_Sans',sans-serif]">Untitled</div>
      <div className="relative border border-[#5fc9cb] bg-gradient-to-b from-[#29568a] via-[#667e92] to-[#a0a1a0]">
        <HeatSink />
        <span className="absolute right-[4px] top-[2px] text-[12px] leading-[16px] text-[#e9eef2] font-['Noto_Sans',sans-serif] whitespace-nowrap">Model Info: E:/Heat sink.hm*</span>
      </div>
    </div>
  </div>
);

const Rainbow = () => (
  <>
    <path d="M1 18.500h5V21H1z" fill="#d22" />
    <path d="M6 18.500h4V21H6z" fill="#d3c" />
    <path d="M10 18.500h4V21h-4z" fill="#22d" />
    <path d="M14 18.500h4V21h-4z" fill="#2b2" />
    <path d="M18 18.500h4V21h-4z" fill="#fc0" />
  </>
);

const VisToolbars = () => (
  <>
    <div className="flex items-center h-[30px]">
      <Grip className="w-[11px]" />
      <Slot className="w-[25px]"><Ico><HyperCube /></Ico></Slot>
      <Drop />
      <Grip className="w-[15px]" />
      <Slot className="w-[24px]"><Ico><Folder x={1} /><Blocks x={7} y={10} /></Ico></Slot>
      <Slot><Ico><Folder x={1} /><Slab x={4} y={8} /></Ico></Slot>
      <Slot><Ico><Folder x={1} /><Material /></Ico></Slot>
      <Slot><Ico><Folder x={1} /><Property x={0} y={5} /></Ico></Slot>
      <Slot><Ico><Folder x={1} /><Load /></Ico></Slot>
      <Slot><Ico><Folder x={1} /><path d="M12 4v9l-6 5M12 13l7 3" stroke="#555" strokeWidth="1.800" /><path d="M15 14h7v6h-7z" fill="#6fbf40" stroke="#35701a" strokeWidth="0.600" /></Ico></Slot>
      <Drop />
      <Sep className="w-[9px]" />
      <Slot className="w-[27px]"><Ico className="w-[20px] h-[21px]"><path d="M5 2l6 5 6-5 3 4-5 5 5 6-4 3-5-5-6 5-3-4 5-5-5-5z" fill="#e4312f" stroke="#b31c1c" /></Ico></Slot>
      <Slot><Ico>{[8, 4, 0].map((x) => <path key={x} d={`M${1 + x} ${10 - x / 2}l4-3 8-1v8l-3 4-9 1z`} fill="#a2a4a6" stroke="#555" strokeWidth="0.800" />)}</Ico></Slot>
      <Slot><Ico><Folder x={4} y={1} /><Folder x={0} y={4} /><path d="M5 11l6-1V7l7 5-6 6v-3l-4 3z" fill="#e3371c" /></Ico></Slot>
      <Slot><Ico><g fill="#333" fontSize="7.500" fontWeight="700" fontFamily="Liberation Sans, sans-serif"><text x="9" y="6.500">2</text><text x="7" y="13.500">1</text><text x="7" y="20.500">3</text></g><path d="M2 7h5M4 5v5M4 3l3-2M16 10h5l-2-2M17 13l-3 4" stroke="#d22" strokeWidth="1.200" /></Ico></Slot>
      <Grip className="w-[14px]" />
      <Slot className="w-[23px]"><Ico className="w-[20px] h-[20px]"><path d="M11 1l3 7 7 .500-5.500 5L17.500 21 11 17l-6.500 4 2-7.500L1 8.500 8 8z" fill="#f7c81e" stroke="#b98908" /></Ico></Slot>
    </div>
    <div className="flex items-center h-[30px] font-['Liberation_Sans',sans-serif] text-[11.500px] tracking-[-0.500px]">
      <Grip className="w-[11px]" />
      <div className="flex items-center w-[92px] h-[20px] bg-white">
        <Ico className="w-[17px] h-[20px]"><g transform="scale(.9)"><Sheet fill="#8184bd" /></g><Rainbow /></Ico>
        <span className="ml-[2px]">Auto</span>
        <Drop className="ml-auto w-[14px]" />
      </div>
      <Slot className="w-[26px]"><Ico><Sheet fill="#fff" /></Ico></Slot>
      <Drop />
      <Slot className="w-[26px]"><Ico><Sheet fill="#7578b4" /></Ico></Slot>
      <Drop />
      <Slot className="w-[25px]"><Ico><Cube /></Ico></Slot>
      <Sep className="w-[11px]" />
      <div className="flex items-center w-[97px] h-[20px] bg-white">
        <Ico className="w-[18px] h-[20px]"><g transform="translate(2 -1) scale(.85)"><Cube fill="#7578b4" mesh /></g><Rainbow /></Ico>
        <span className="ml-[1px]">By Comp</span>
        <Drop className="ml-auto w-[13px]" />
      </div>
      <Slot><Ico><Cube fill="#fff" mesh /></Ico></Slot>
      <Drop />
      <Slot><Ico><Cube fill="#8184c4" mesh /></Ico></Slot>
      <Drop />
      <Slot><Ico><path d="M5 14l12-6" stroke="#444" strokeWidth="1.500" /></Ico></Slot>
      <Drop className="w-[9px]" />
      <Slot><Ico><path d="M1 11l10-5 10 5-10 5z" fill="#8a8a8a" stroke="#333" /><path d="M6 8.500l10 5M16 8.500l-10 5" stroke="#333" /></Ico></Slot>
      <Drop />
      <Slot><Ico><g transform="translate(-1.500 -2) scale(1.130)"><Slab x={2.5} y={4.5} top="#b3b8fb" side="#3c47c2" /></g></Ico></Slot>
      <Drop />
      <Slot><Ico className="w-[18px] h-[18px]"><g fill="#7e6fb4" stroke="#4b4080"><path d="M2 7l6-1v5l-6 1zM12 3l6-1v5l-6 1zM2 16l6-1v5l-6 1zM12 12l6-1v5l-6 1z" /></g></Ico></Slot>
      <Slot><Ico><path d="M2 3h18v13H2z" fill="#49a7de" stroke="#333" strokeWidth="1.300" /><path d="M2.500 3.500h17v5l-17 4z" fill="#86c9ee" /><path d="M9 17h4v2h3v2H6v-2h3z" fill="#222" /></Ico></Slot>
    </div>
  </>
);

// ---- constraints panel ----

const raised = 'flex items-center justify-center h-[19px] shrink-0 border border-t-[#fafafa] border-l-[#fafafa] border-r-[#777] border-b-[#777] border-r-2 border-b-2 whitespace-nowrap';
const field = 'flex items-center h-[19px] shrink-0 bg-white border-t-[1.500px] border-l-2 border-[#777] whitespace-nowrap';

const Check = ({ checked = true }: { checked?: boolean }) => (
  <span className="relative w-[13px] h-[13px] shrink-0 bg-white border-t border-l border-[#777]">
    {checked && (
      <svg viewBox="0 0 12 12" className="w-[12px] h-[12px]" fill="none"><path d="M2 5l3 4 5-6" stroke="#111" strokeWidth="2" /></svg>
    )}
  </span>
);

const Radio = ({ on = false }: { on?: boolean }) => (
  <span className="flex items-center justify-center w-[10px] h-[10px] shrink-0 rounded-full bg-white border border-t-[#333] border-l-[#333] border-r-[#ddd] border-b-[#ddd]">
    {on && <span className="w-[4px] h-[4px] rounded-full bg-black" />}
  </span>
);

const DarkArrow = () => (
  <svg viewBox="0 0 10 6" className="w-[10px] h-[6px]"><path d="M0 0h10L5 6z" fill="#111" /></svg>
);

const leftCells = [
  <>
    <Radio on /><span className="ml-[8px] w-[36px]">create</span>
    <div className={`${raised} w-[23px] pl-[1px]`}><DarkArrow /></div>
    <div className={`${raised} w-[24px] ml-px`}><DarkArrow /></div>
    <div className="flex items-center justify-center w-[147px] h-[19px] border-2 border-[#3fe0d2] bg-[#e3e35c] pl-[3px]">nodes</div>
    <div className={`${raised} w-[24px]`}>
      <svg viewBox="0 0 10 10" className="w-[10px] h-[10px]"><path d="M0 0h2.500v10H0zM10 0v10L3.500 5z" fill="#111" /></svg>
    </div>
  </>,
  <><Radio /><span className="ml-[8px]">update</span></>,
  <>
    <div className={`${raised} w-[182px] ml-[53px]`}><span className="pl-[6px]">relative size =</span></div>
    <div className={`${field} w-[134px] justify-end pt-[2px]`}>10.000</div>
    <span className="w-[7px] shrink-0" /><Check /><span className="ml-[6px] whitespace-nowrap w-[78px]">label constraints</span>
  </>,
  <>
    <div className={`${raised} w-[24px] ml-[53px]`}>
      <svg viewBox="0 0 8 11" className="w-[8px] h-[11px]"><path d="M0 4.500h8L4 0zM0 6.500h8L4 11z" fill="#111" /></svg>
    </div>
    <div className={`${raised} w-[171px]`}><span className="pl-[4px]">constant value</span></div>
    <span className="w-[128px]" /><Check checked={false} /><span className="ml-[6px] tracking-[0.200px]">fixed</span>
  </>,
  null,
  null,
];

const actions = [
  { label: 'create', style: 'bg-[#58bd5c] outline-2 outline-[#145e1b] outline-offset-[-2px] border-[#3c8a3f]' },
  { label: 'create/edit', style: 'bg-[#58bd5c] border-[#3c8a3f]' },
  { label: 'reject', style: 'bg-[#58bd5c] border-[#3c8a3f]' },
  { label: 'review', style: 'bg-[#6b7ddb] border-[#4a58a4]' },
];

const actionBase = 'flex items-center justify-center w-[67px] h-[19px] border-r-2 border-b-2 pl-[5px] pt-[1px] whitespace-nowrap';

const ConstraintsPanel = () => (
  <div className="flex flex-col pt-[15px] h-[158px] mt-[4px] w-[862px] ml-px border-t-2 border-[#b8b8b8] font-['Noto_Sans',sans-serif] text-[12.200px] text-[#222]">
    {leftCells.map((cell, i) => (
      <div key={i} className="flex items-center h-[19.700px] shrink-0">
        <div className="flex items-center w-[481px] shrink-0 pl-[7px]">{cell}</div>
        <Check />
        <span className="ml-[6px] w-[48px] tracking-[0.400px]">dof{i + 1}</span>
        <div className={`${raised} w-[36px] pl-[4px]`}>=</div>
        <div className={`${field} w-[131px] justify-end pt-[2px] tracking-[-0.200px]`}>0.000</div>
        {actions[i] && <div className={`${actionBase} ml-[68px] ${actions[i].style}`}>{actions[i].label}</div>}
      </div>
    ))}
    <div className="flex items-center h-[19.700px] shrink-0">
      <div className={`${raised} w-[146px] ml-[426px]`}><span className="pl-[4px]">load types =</span></div>
      <div className={`${field} w-[199px] pl-[4px]`}>SPC</div>
      <div className={`${actionBase} ml-[12px] bg-[#bd5b5b] border-[#8a3c3c]`}>return</div>
    </div>
  </div>
);

// ---- status bar and taskbar ----

const cellBase = 'flex items-center h-[16px] border-t border-l border-[#222] pl-[2px] whitespace-nowrap';

const StatusBar = () => (
  <div className="flex items-center h-[18px] pl-[4px] pt-[1px] font-['Liberation_Sans',sans-serif] text-[11px] tracking-[-0.400px]">
    <span className="w-[889px]">Ready</span>
    <div className={`${cellBase} w-[87px]`} />
    <div className={`${cellBase} w-[88px] ml-[2px]`}>Heatsink</div>
    <div className={`${cellBase} w-[102px] ml-[2px]`}>
      <span className="w-[7px] h-[7px] ml-[3px] mr-[4px] border border-[#222] bg-[#ddd]" />Heatsink_Body_0
    </div>
    <div className={`${cellBase} w-[102px] ml-[2px]`}>
      <span className="w-[7px] h-[7px] ml-[3px] mr-[4px] bg-black" />spc
    </div>
  </div>
);

const TaskbarApps = () => (
  <>
    <Slot className="w-[46px]"><svg viewBox="0 0 16 16" className="w-[16px] h-[16px]" fill="none"><circle cx="8" cy="8" r="6.700" stroke="#fff" strokeWidth="2" /></svg></Slot>
    <Slot className="w-[44px]"><svg viewBox="0 0 16 16" className="w-[16px] h-[16px]" fill="none" stroke="#fff"><path d="M1 0v3h9V0M1 6h9v5H1zM1 16v-3h9v3M14 0v16M13 5h2v2h-2z" /></svg></Slot>
    <div className="flex items-center justify-center w-[38px] ml-[6px] border-b-[3px] border-[#76b9ed]">
      <svg viewBox="0 0 20 20" className="w-[21px] h-[20px]"><path d="M0 1h7l2 3h11v14H0z" fill="#e9a93a" /><path d="M0 6h20v13H0z" fill="#fcdc73" /><path d="M4 19v-7h13v7h-4v-3H8v3z" fill="#4e96c5" /></svg>
    </div>
    <Slot className="w-[46px] ml-[4px]">
      <svg viewBox="0 0 20 22" className="w-[21px] h-[22px]" fill="none"><path d="M6 6V4c0-4 8-4 8 0v2" stroke="#fff" strokeWidth="1.500" /><path d="M0 5h20v14q0 2-2 2H2q-2 0-2-2z" fill="#fff" /><path d="M5 8h4.500v4.500H5z" fill="#e5511f" /><path d="M10.500 8H15v4.500h-4.500z" fill="#74ae1c" /><path d="M5 13.500h4.500V18H5z" fill="#219ed9" /><path d="M10.500 13.500H15V18h-4.500z" fill="#f4b21b" /></svg>
    </Slot>
    <Slot className="w-[46px]"><svg viewBox="0 0 22 20" className="w-[23px] h-[21px]"><path d="M0 7l11-7 11 7v13H0z" fill="#fff" /><path d="M2 7h18l-7 6 3 4-7-5z" fill="#22343a" /></svg></Slot>
    <Slot className="w-[46px]">
      <svg viewBox="0 0 16 22" className="w-[16px] h-[22px]"><path d="M0 0h16v22H0z" fill="#fff" /><path d="M2 2h12v4H2z" fill="#22343a" /><path d="M3 9.500h10M3 13.500h10M3 17.500h10" stroke="#22343a" strokeWidth="2" strokeDasharray="2 2" /></svg>
    </Slot>
    <div className="flex items-center justify-center w-[44px] h-full ml-[1px] bg-[#4b5b62] border-b-[3px] border-[#76b9ed]"><Ico><HyperCube /></Ico></div>
    <div className="flex items-center justify-center w-[38px] h-full ml-[5px] border-b-[3px] border-[#76b9ed]">
      <svg viewBox="0 0 20 24" className="w-[19px] h-[24px]"><path d="M8 1h4l5 18H3z" fill="#f07d12" /><path d="M7.300 5h5.400l1.300 5H6zM5 13h10l1 4H4z" fill="#f3f0ea" /><path d="M1 18h18l1 5H0z" fill="#f58c14" /></svg>
    </div>
  </>
);

const Taskbar = () => (
  <div className="flex h-[37px] bg-[#20333a] text-[#e9eef0]">
    <div className="flex items-center justify-center w-[45px]">
      <svg viewBox="0 0 16 16" className="w-[15px] h-[17px]"><path d="M0 2l7-1v6.500H0zM8 1l8-1v7.500H8zM0 8.500h7V15l-7-1zM8 8.500h8V16l-8-1z" fill="#fff" /></svg>
    </div>
    <div className="flex items-center w-[322px] bg-[#323233] border border-[#4b5254] pl-[10px]">
      <Search size={17} strokeWidth={1.500} className="-scale-x-100" />
      <span className="ml-[9px] text-[14px] tracking-[-0.450px] text-[#c9cbcc]">Type here to search</span>
    </div>
    <TaskbarApps />
    <div className="flex items-center ml-auto text-[14px] tracking-[-0.500px] whitespace-nowrap">
      <Newspaper size={21} strokeWidth={1.700} className="-scale-x-100" />
      <span className="ml-[9px] w-[36px]">25°C</span>
      <span className="w-[46px] text-[13.500px]">Haze</span>
      <Slot className="w-[22px]"><ChevronUp size={16} /></Slot>
      <Slot className="w-[23px]"><svg viewBox="0 0 12 18" className="w-[11px] h-[17px]" fill="none" stroke="#fff" strokeWidth="1.200"><path d="M2 5h8v8H2zM3 2q3-2 6 0M3 16q3 2 6 0" /><circle cx="6" cy="9" r="2" /></svg></Slot>
      <Slot className="w-[23px]"><Ico className="w-[17px] h-[17px]"><path d="M5 16a5 5 0 0 1 0-9C7 1 15 1 16 7c4 1 5 6 2 9z" fill="#c4c8cb" /><circle cx="15" cy="15" r="6" fill="#2b7cc7" stroke="#dce8f2" /><path d="M12 14h5l-2-2M18 16h-5l2 2" stroke="#fff" /></Ico></Slot>
      <Slot className="w-[23px]"><svg viewBox="0 0 15 10" className="w-[15px] h-[10px]" fill="none"><path d="M.6.6h12v8.800H.6z" stroke="#fff" strokeWidth="1.200" /><path d="M2.500 2.500h4v5h-4zM13 3h1.500v4H13z" fill="#fff" /></svg></Slot>
      <Slot className="w-[22px]"><Globe size={16} strokeWidth={1.500} /></Slot>
      <Slot className="w-[23px]"><Volume2 size={17} strokeWidth={1.500} /></Slot>
      <span className="w-[29px] text-center text-[12px] tracking-[-0.700px]">ENG</span>
      <div className="w-[73px] text-center text-[12px] leading-[17px] tracking-[-0.700px]">
        <div>21:25</div>
        <div>19-12-2022</div>
      </div>
      <div className="relative w-[42px] h-[37px] border-r border-[#66747a] mr-[3px]">
        <svg viewBox="0 0 16 16" className="w-[17px] h-[17px] ml-[7px] mt-[10px]"><path d="M0 0h16v13H6l-3 3v-3H0z" fill="#fff" /><path d="M3 4h10M3 7h10M3 10h6" stroke="#20333a" /></svg>
        <span className="absolute left-[13px] top-[17px] w-[15px] h-[15px] rounded-full bg-[#2c3b41] border border-[#9aa5aa] text-[10px] leading-[13px] text-center">5</span>
      </div>
    </div>
  </div>
);

export default function App() {
  return (
    <div className="flex flex-col w-[1280px] h-[720px] overflow-hidden bg-[#f0f0f0] text-black font-['Open_Sans','Noto_Sans',sans-serif]">
      <TitleBar />
      <MenuBar />
      <MainToolbar />
      <NavToolbar />
      <div className="flex h-[564px]">
        <SidePanel />
        <div className="w-px ml-[3px] mr-px my-[2px] bg-[#222] shrink-0" />
        <div className="flex flex-col w-[871px] h-[563px] pl-[1px] border-r border-[#222]">
          <GraphicsArea />
          <VisToolbars />
          <ConstraintsPanel />
          <div className="h-px w-[863px] ml-px bg-black shrink-0" />
        </div>
      </div>
      <div className="h-[19px] border-b border-[#9aa3a6]">
        <StatusBar />
      </div>
      <Taskbar />
    </div>
  );
}
